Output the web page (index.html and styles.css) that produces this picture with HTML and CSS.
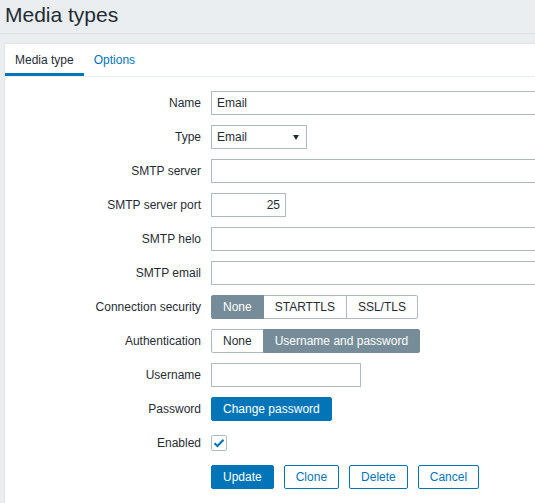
FILE: index.html
```html
<!DOCTYPE html>
<html>
<head>
<meta charset="utf-8">
<link rel="stylesheet" href="styles.css">
</head>
<body>
<header class="page-header">
  <h1 class="page-title">Media types</h1>
</header>
<div class="wrap">
  <div class="panel">
    <ul class="tabs">
      <li class="tab tab-active">Media type</li>
      <li class="tab">Options</li>
    </ul>
    <div class="form">
      <div class="label">Name</div>
      <div class="field"><div class="input input-wide">Email</div></div>

      <div class="label">Type</div>
      <div class="field"><div class="input select">Email<span class="arrow"></span></div></div>

      <div class="label">SMTP server</div>
      <div class="field"><div class="input input-wide"></div></div>

      <div class="label">SMTP server port</div>
      <div class="field"><div class="input input-port">25</div></div>

      <div class="label">SMTP helo</div>
      <div class="field"><div class="input input-wide"></div></div>

      <div class="label">SMTP email</div>
      <div class="field"><div class="input input-wide"></div></div>

      <div class="label">Connection security</div>
      <div class="field">
        <div class="radio">
          <span class="seg seg-on">None</span><span class="seg">STARTTLS</span><span class="seg">SSL/TLS</span>
        </div>
      </div>

      <div class="label">Authentication</div>
      <div class="field">
        <div class="radio">
          <span class="seg">None</span><span class="seg seg-on">Username and password</span>
        </div>
      </div>

      <div class="label">Username</div>
      <div class="field"><div class="input input-user"></div></div>

      <div class="label">Password</div>
      <div class="field"><span class="btn">Change password</span></div>

      <div class="label">Enabled</div>
      <div class="field">
        <span class="checkbox">
          <svg width="12" height="10" viewBox="0 0 12 10"><path d="M1.5 5.2 L4.5 8 L10.5 1.8" fill="none" stroke="#0275b8" stroke-width="2.2"/></svg>
        </span>
      </div>

      <div class="label"></div>
      <div class="field buttons">
        <span class="btn">Update</span>
        <span class="btn btn-alt">Clone</span>
        <span class="btn btn-alt">Delete</span>
        <span class="btn btn-alt">Cancel</span>
      </div>
    </div>
  </div>
</div>
</body>
</html>
```

FILE: styles.css
```css
html, body {
  margin: 0;
  padding: 0;
}
body {
  background: #ebeef0;
  font-family: Arial, "Liberation Sans", sans-serif;
  font-size: 12px;
  color: #1f2c33;
  width: 535px;
  height: 503px;
  overflow: hidden;
}
.page-header {
  height: 33px;
  border-bottom: 1px solid #dde1e4;
  padding: 0 5px;
}
.page-title {
  margin: 0;
  padding-top: 3px;
  font-size: 21px;
  line-height: 24px;
  font-weight: normal;
  color: #1f2c33;
}
.wrap {
  padding: 9px 0 0 4px;
}
.panel {
  background: #fff;
  border: 1px solid #dfe4e7;
  border-right: none;
  height: 480px;
  overflow: hidden;
}
.tabs {
  list-style: none;
  margin: 0;
  padding: 0;
  display: flex;
  border-bottom: 1px solid #ebeef0;
}
.tab {
  padding: 9px 10px 6px;
  line-height: 14px;
  color: #0275b8;
  border-bottom: 3px solid transparent;
}
.tab-active {
  color: #1f2c33;
  border-bottom-color: #0275b8;
}
.form {
  display: grid;
  grid-template-columns: 206px 1fr;
  row-gap: 10px;
  padding-top: 14px;
}
.label {
  height: 24px;
  line-height: 24px;
  text-align: right;
  padding-right: 10px;
  white-space: nowrap;
}
.field {
  height: 24px;
  display: flex;
  align-items: center;
  white-space: nowrap;
  min-width: 0;
}
.input {
  box-sizing: border-box;
  height: 24px;
  line-height: 22px;
  border: 1px solid #acbbc2;
  padding: 0 5px;
  background: #fff;
  flex: none;
}
.input-wide { width: 453px; }
.input-port { width: 75px; text-align: right; }
.input-user { width: 150px; }
.select {
  width: 96px;
  position: relative;
}
.arrow {
  position: absolute;
  right: 7px;
  top: 9px;
  width: 0;
  height: 0;
  border-left: 3px solid transparent;
  border-right: 3px solid transparent;
  border-top: 5px solid #1f2c33;
}
.radio {
  display: flex;
}
.seg {
  box-sizing: border-box;
  height: 24px;
  line-height: 22px;
  padding: 0 11px;
  border: 1px solid #acbbc2;
  margin-left: -1px;
  background: #fff;
  color: #1f2c33;
}
.seg:first-child {
  margin-left: 0;
  border-radius: 2px 0 0 2px;
}
.seg:last-child {
  border-radius: 0 2px 2px 0;
}
.seg-on {
  background: #768d99;
  border-color: #768d99;
  color: #fff;
  position: relative;
}
.btn {
  box-sizing: border-box;
  height: 24px;
  line-height: 22px;
  padding: 0 11px;
  border: 1px solid #0275b8;
  border-radius: 2px;
  background: #0275b8;
  color: #fff;
}
.btn-alt {
  background: #fff;
  color: #0275b8;
}
.buttons {
  gap: 10px;
}
.checkbox {
  box-sizing: border-box;
  width: 16px;
  height: 16px;
  border: 1px solid #acbbc2;
  border-radius: 2px;
  display: flex;
  align-items: center;
  justify-content: center;
}
.checkbox svg {
  display: block;
}
```
